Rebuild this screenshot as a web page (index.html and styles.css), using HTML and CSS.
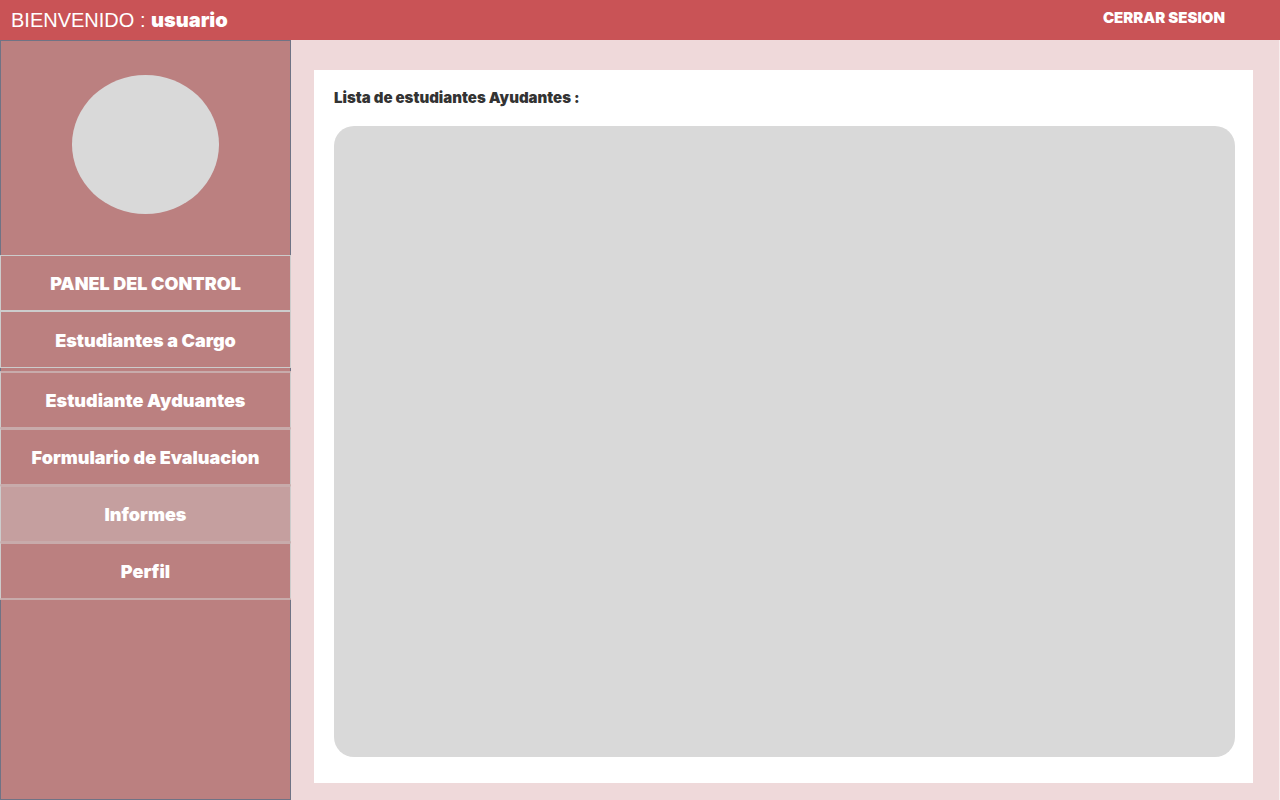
FILE: index.html
```html
<!DOCTYPE html>
<html lang="es">
<head>
<meta charset="utf-8">
<title>Estudiantes Ayudantes</title>
<link rel="stylesheet" href="styles.css">
</head>
<body>
<header class="topbar">
  <p class="welcome">BIENVENIDO : <strong class="user">usuario</strong></p>
  <a class="logout" href="#">CERRAR SESION</a>
</header>
<div class="layout">
  <aside class="sidebar">
    <div class="avatar"></div>
    <nav class="menu">
      <div class="menu-group">
        <a class="item item-caps" href="#">PANEL DEL CONTROL</a>
        <a class="item" href="#">Estudiantes a Cargo</a>
      </div>
      <div class="menu-group menu-group-soft">
        <a class="item" href="#">Estudiante Ayduantes</a>
        <a class="item" href="#">Formulario de Evaluacion</a>
        <a class="item item-active" href="#">Informes</a>
        <a class="item" href="#">Perfil</a>
      </div>
    </nav>
  </aside>
  <main class="content">
    <section class="card">
      <h1 class="title">Lista de estudiantes Ayudantes :</h1>
      <div class="list"></div>
    </section>
  </main>
</div>
</body>
</html>
```

FILE: styles.css
```css
* { box-sizing: border-box; }

body {
  margin: 0;
  min-height: 100vh;
  display: flex;
  flex-direction: column;
  background: #efd9da;
  font-family: "Arial Black", Inter, "Liberation Sans", sans-serif;
  font-optical-sizing: none;
  font-weight: 900;
}

a { color: inherit; text-decoration: none; }

.topbar {
  display: flex;
  justify-content: space-between;
  height: 40px;
  padding: 0 55px 0 11px;
  background: #c95356;
  color: #fff;
}

.welcome {
  margin: 0;
  font: 400 20px/40px "Liberation Sans", Arial, sans-serif;
}

.user {
  font-family: "Arial Black", Inter, sans-serif;
  font-weight: 900;
}

.logout { font-size: 15px; line-height: 36px; }

.layout { flex: 1; display: flex; }

.sidebar {
  width: 291px;
  flex: none;
  border: 1px solid #6f7385;
  background: #bb8080;
}

.avatar {
  width: 147px;
  height: 139px;
  margin: 34px auto 41px;
  border-radius: 50%;
  background: #d9d9d9;
}

.menu {
  display: flex;
  flex-direction: column;
  gap: 3px;
  margin: 0 -1px;
  color: #fff;
}

.item {
  display: flex;
  align-items: center;
  justify-content: center;
  height: 57px;
  padding-top: 2px;
  border: 1px solid #ccc;
  background: #bb8080;
  font-size: 18px;
  line-height: 24px;
}

.item-caps { height: 56px; }

.menu-group-soft { border-bottom: 1px solid #c8abab; }

.menu-group-soft .item {
  border-top: 2px solid #c8abab;
  border-bottom-color: #c8abab;
}

.menu-group-soft .item-active { background: #c59f9f; }

.content {
  flex: 1;
  display: flex;
  padding: 30px 26px 17px 23px;
  border-right: 1px solid #f8eeee;
}

.card {
  flex: 1;
  display: flex;
  flex-direction: column;
  gap: 16px;
  padding: 16px 18px 26px 20px;
  background: #fff;
}

.title {
  margin: 0;
  color: #333;
  font-size: 15px;
  font-weight: 900;
  line-height: 24px;
}

.list {
  flex: 1;
  border-radius: 20px;
  background: #d9d9d9;
}
```
